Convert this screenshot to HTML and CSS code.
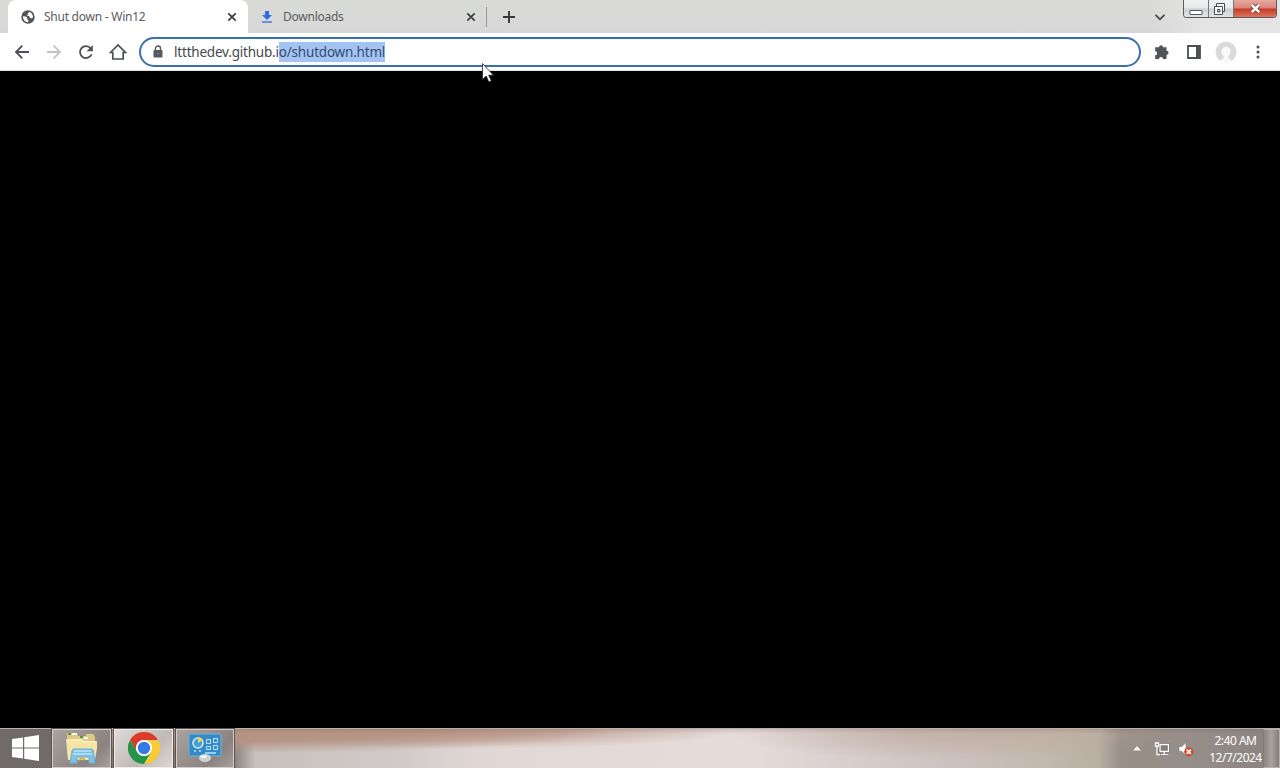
FILE: index.html
```html
<!DOCTYPE html>
<html lang="en">
<head>
    <meta charset="UTF-8">
    <meta name="viewport" content="width=device-width, initial-scale=1.0">
    <title>Shut down - Win12</title>
    <link rel="stylesheet" href="styles.css">
</head>
<body>

    <div class="desktop">
        <!-- Tabs -->
        <div class="tab-strip">
            <div class="tab tab-active">
                <svg class="favicon" width="14" height="14" viewBox="0 0 14 14">
                    <circle cx="7" cy="7" r="6.7" fill="#505357"/>
                    <path d="M2 6.2l3 .3 1.300 1.300-.3 1.500 1.600.7-.5 2.200C4 12 1.800 9.600 2 6.200zM8.600 1.900l-1.900 1.400.4 1.300-1.500 1 2.700.7.6 1.500 2.100.6 1-1.300C12 4.500 10.700 2.600 8.600 1.900z" fill="#fff"/>
                </svg>
                <span class="tab-title">Shut down - Win12</span>
                <svg class="tab-close" width="10" height="10" viewBox="0 0 10 10"><path d="M1.300 1.300l7.400 7.400M8.700 1.300L1.300 8.700" stroke="#3c4043" stroke-width="1.800"/></svg>
            </div>
            <div class="tab">
                <svg class="favicon" width="14" height="14" viewBox="0 0 14 14">
                    <path d="M5 1h4v4h3L7 10 2 5h3z" fill="#2e6de0"/>
                    <path d="M2 11.200h10v1.600H2z" fill="#4f82e0"/>
                </svg>
                <span class="tab-title">Downloads</span>
                <svg class="tab-close" width="10" height="10" viewBox="0 0 10 10"><path d="M1.300 1.300l7.400 7.400M8.700 1.300L1.300 8.700" stroke="#3c4043" stroke-width="1.700"/></svg>
            </div>
            <div class="tab-divider"></div>
            <svg class="new-tab" width="12" height="12" viewBox="0 0 12 12"><path d="M6 0v12M0 6h12" stroke="#36383c" stroke-width="1.900"/></svg>
            <svg class="tab-search" width="12" height="12" viewBox="0 0 12 12"><path d="M1.500 3.800L6 8.300l4.500-4.500" fill="none" stroke="#43454a" stroke-width="1.800"/></svg>
            <div class="window-buttons">
                <div class="win-btn btn-min">
                    <svg width="14" height="8" viewBox="0 0 14 8"><path d="M1 2.500h12v4H1z" fill="#fff" stroke="#555861"/></svg>
                </div>
                <div class="win-btn btn-restore">
                    <svg width="13" height="13" viewBox="0 0 13 13">
                        <path d="M3.500.500h8v8h-8z" fill="#f5f5f5" stroke="#484b52"/>
                        <path d="M1.500 3.500h8v8h-8z" fill="#fff" stroke="#484b52"/>
                        <path d="M4.500 6.500h2.500v2.500h-2.500z" fill="#ccc" stroke="#484b52"/>
                    </svg>
                </div>
                <div class="win-btn btn-close">
                    <svg width="13" height="11" viewBox="0 0 13 11"><path d="M3 2l7 7M10 2L3 9" stroke="#74423d" stroke-width="4.400"/><path d="M2.800 1.800l7.400 7.400M10.200 1.800L2.800 9.200" stroke="#fff" stroke-width="2.600"/></svg>
                </div>
            </div>
        </div>

        <!-- Toolbar -->
        <div class="toolbar">
            <div class="nav-icons">
                <svg width="16" height="16" viewBox="0 0 16 16"><path d="M15 8H2M8.300 1.700L2 8l6.300 6.300" fill="none" stroke="#4c4f53" stroke-width="1.800"/></svg>
                <svg width="16" height="16" viewBox="0 0 16 16"><path d="M1 8h13M7.700 1.700L14 8l-6.300 6.300" fill="none" stroke="#c0c2c4" stroke-width="1.800"/></svg>
                <svg width="16" height="16" viewBox="0 0 16 16"><path d="M13.600 10.200A6 6 0 1 1 12.700 4.300" fill="none" stroke="#4c4f53" stroke-width="1.800"/><path d="M14.800 1v6.200H8.600z" fill="#4c4f53"/></svg>
                <svg width="18" height="18" viewBox="0 0 18 18"><path d="M1.500 9.500L9 2l7.500 7.500h-2.300V16H3.800V9.500z" fill="none" stroke="#4c4f53" stroke-width="1.700"/></svg>
            </div>
            <div class="address-bar">
                <svg class="lock" width="10" height="13" viewBox="0 0 10 13">
                    <path d="M2.500 6V3.500a2.500 2.500 0 0 1 5 0V6" fill="none" stroke="#55585c" stroke-width="1.400"/>
                    <rect x=".5" y="5" width="9" height="7.500" rx="1" fill="#55585c"/>
                    <circle cx="5" cy="8.700" r=".8" fill="#85878a"/>
                </svg>
                <div class="url"><span class="url-host">lttthedev.github.i</span><span class="url-selected">o/shutdown.html</span></div>
            </div>
            <div class="toolbar-icons">
                <svg width="16" height="16" viewBox="0 0 16 16"><path d="M5 3.200a2 2 0 0 1 4 0h3.500v3.500a2.100 2.100 0 0 1 0 4.200V15H9a2 2 0 0 0-4 0H1.200v-3.700a2 2 0 0 0 0-4V3.200z" fill="#505357"/></svg>
                <svg width="16" height="16" viewBox="0 0 16 16"><path d="M2 2h12v12H2z" fill="none" stroke="#4c4f53" stroke-width="1.800"/><path d="M10 2h4v12h-4z" fill="#4c4f53"/></svg>
                <svg class="avatar" width="22" height="22" viewBox="0 0 22 22"><circle cx="11" cy="11" r="10.500" fill="#d9dada"/><path d="M6.500 10.500a4.500 4.800 0 1 1 9 0c0 2.400-1 3.800-2.200 4.600v2.100l2.700 1.600v1.600q-5 2.200-10 0v-1.600l2.700-1.600v-2.100c-1.200-.8-2.200-2.200-2.200-4.600z" fill="#fafafa"/></svg>
                <svg width="4" height="16" viewBox="0 0 4 16"><circle cx="2" cy="3" r="1.500" fill="#4c4f53"/><circle cx="2" cy="8" r="1.500" fill="#4c4f53"/><circle cx="2" cy="13" r="1.500" fill="#4c4f53"/></svg>
            </div>
        </div>

        <!-- Page content -->
        <div class="page"></div>

        <!-- Taskbar -->
        <div class="taskbar">
            <div class="start">
                <svg width="27" height="26" viewBox="0 0 27 26"><path d="M0 4l11-1.600v10H0zM12.200 2.200L27 0v12.400H12.200zM0 13.500h11v10L0 22zM12.200 13.500H27V26l-14.800-2.200z" fill="#fff"/></svg>
            </div>
            <div class="task">
                <svg width="34" height="32" viewBox="0 0 34 32">
                    <path d="M2 4V1h10l1 3h8V2h7l2 3v22H3z" fill="#dfc985"/>
                    <path d="M3 2h3M15 5h3" stroke="#4e9847" stroke-width="2"/>
                    <path d="M7 2h5M19 6h4" stroke="#f8f8ee" stroke-width="2"/>
                    <path d="M1 7h16l2 2h13v7l-2 12H3z" fill="#f5e4a4"/>
                    <path d="M2 8h14l2 2h13" fill="none" stroke="#fff7cc"/>
                    <path d="M5 31l2-12q.5-2 2-2h17q2 0 2.500 2L30 31h-6v-6H12v6z" fill="#80c1e6" stroke="#6aaed4"/>
                    <path d="M9 19h17M8 22h19" stroke="#b9e4f8" stroke-width="1.500"/>
                    <path d="M14 28l3-2 3 2" fill="none" stroke="#cbb364" stroke-width="2"/>
                </svg>
            </div>
            <div class="task task-active">
                <svg width="32" height="32" viewBox="0 0 32 32">
                    <path d="M16 8H29.860A16 16 0 0 1 16 32L22.930 20z" fill="#f8ca35"/>
                    <path d="M2.140 8A16 16 0 0 1 29.860 8H16a8 8 0 0 0-6.930 12z" fill="#dc3b2c"/>
                    <path d="M2.140 8L9.070 20A8 8 0 0 0 22.930 20L16 32A16 16 0 0 1 2.140 8z" fill="#27934a"/>
                    <circle cx="16" cy="16" r="8" fill="#fff"/>
                    <circle cx="16" cy="16" r="6.200" fill="#3477e8"/>
                </svg>
            </div>
            <div class="task task-panel">
                <svg width="34" height="30" viewBox="0 0 34 30">
                    <rect x="1" y="1" width="32" height="22" rx="1.500" fill="#3489c8" stroke="#72b2db"/>
                    <circle cx="10" cy="10" r="5" fill="#479fd9" stroke="#d2edf8" stroke-width="1.500"/>
                    <path d="M10 10V4a6 6 0 0 1 5 3z" fill="#f1d34e"/>
                    <path d="M18.500 6.500h4v4h-4zM25.500 5.500h4v4h-4zM18.500 13.500h4v3h-4zM25.500 12.500h4v4h-4z" fill="#338acb" stroke="#c5e5f5"/>
                    <path d="M6 18h2M11 18h2M17 20h11" stroke="#b9e1f3" stroke-width="1.500"/>
                    <ellipse cx="17" cy="25" rx="6" ry="4" fill="#cdd4d5"/>
                    <ellipse cx="15.500" cy="23.500" rx="3" ry="1.500" fill="#f3f5f5"/>
                </svg>
            </div>
            <div class="tray">
                <svg class="tray-arrow" width="8" height="5" viewBox="0 0 8 5"><path d="M4 0l4 4.500H0z" fill="#f5f2f0"/></svg>
                <svg class="tray-network" width="16" height="16" viewBox="0 0 16 16">
                    <path d="M6 3.500h8.500v7H6zM10.200 10.500v3M7 13.700h7" fill="none" stroke="#665f5c" stroke-width="2.600"/>
                    <path d="M6 3.500h8.500v7H6zM10.200 10.500v3M7 13.700h7" fill="#847d79" stroke="#fff" stroke-width="1.300"/>
                    <path d="M1.500 2v3h3V2zM3 5v8.500h3" fill="#746d6a" stroke="#fff" stroke-width="1.300"/>
                </svg>
                <svg class="tray-sound" width="16" height="16" viewBox="0 0 16 16">
                    <path d="M1 5.500h3L8 1.500v13L4 10.500H1z" fill="#fff" stroke="#706762" stroke-width=".5"/>
                    <circle cx="10.800" cy="10.800" r="4.600" fill="#d04a2c"/>
                    <path d="M8.700 8.700l4.200 4.200M12.900 8.700l-4.200 4.200" stroke="#fff" stroke-width="1.700"/>
                </svg>
                <div class="clock">
                    <span class="time">2:40 AM</span>
                    <span class="date">12/7/2024</span>
                </div>
                <div class="show-desktop"></div>
            </div>
        </div>

        <svg class="cursor" width="12" height="20" viewBox="0 0 12 20"><path d="M.500.500v16l3.700-3.500 2.600 5.900 2.500-1.100-2.600-5.600h4.800z" fill="#fff" stroke="#222" stroke-width=".8"/></svg>
    </div>

</body>
</html>
```
FILE: styles.css
```css
* {
    box-sizing: border-box;
}

body {
    font-family: "Noto Sans", "Open Sans", sans-serif;
    margin: 0;
    overflow: hidden;
}

svg {
    display: block;
    flex-shrink: 0;
}

.desktop {
    display: flex;
    flex-direction: column;
    width: 1280px;
    height: 768px;
    background-color: #000;
    position: relative;
}

.tab-strip {
    display: flex;
    height: 33px;
    align-items: center;
    padding-left: 8px;
    background: linear-gradient(90deg, transparent 1150px, rgba(235, 235, 235, 0.6) 1200px), linear-gradient(#d9dbd8, #d8d7d8);
}

.tab {
    display: flex;
    align-items: center;
    width: 239px;
    height: 33px;
    padding: 0 11px 0 12px;
    color: #5a5c5f;
}

.tab-active {
    width: 240px;
    padding-left: 13px;
    padding-right: 11px;
    background-color: #fff;
    border-radius: 8px 8px 0 0;
}

.tab-title {
    margin-left: 9px;
    font-size: 12px;
    white-space: nowrap;
    letter-spacing: -0.25px;
}

.tab-close {
    margin-left: auto;
}

.tab-divider {
    width: 1px;
    height: 20px;
    margin-left: -1px;
    background-color: #96989b;
}

.new-tab {
    margin-left: 16px;
}

.tab-search {
    margin-left: auto;
    margin-right: 17px;
}

.window-buttons {
    display: flex;
    align-self: flex-start;
    height: 18px;
    margin-right: 3px;
    border: 1px solid #5b5c60;
    border-top: none;
    border-radius: 0 0 4px 4px;
    overflow: hidden;
}

.win-btn {
    display: flex;
    align-items: center;
    justify-content: center;
    width: 25px;
    background: linear-gradient(#f2f2f2 0, #e8e8e8 48%, #cccdce 52%, #e3e4e4 100%);
    border-right: 1px solid #76777a;
}

.btn-min {
    padding-top: 6px;
}

.btn-restore {
    padding-right: 3px;
    padding-top: 1px;
}

.btn-close {
    width: 42px;
    border-right: none;
    background: linear-gradient(#e7aaa0 0, #d98477 48%, #c23c28 52%, #df7558 100%);
}

.toolbar {
    display: flex;
    align-items: center;
    height: 38px;
    background-color: #fff;
    border-bottom: 1px solid #dfe2e5;
}

.nav-icons {
    display: flex;
    align-items: center;
    gap: 16px;
    width: 139px;
    padding-left: 14px;
}

.nav-icons svg:last-child {
    margin-left: -1px;
}

.address-bar {
    display: flex;
    align-items: center;
    width: 1002px;
    height: 30px;
    padding-left: 12px;
    border: 2px solid #3871b2;
    border-radius: 15px;
}

.url {
    display: flex;
    margin-left: 11px;
    font-size: 13.5px;
    line-height: 20px;
    letter-spacing: -0.2px;
    color: #45484c;
    white-space: nowrap;
}

.url-selected {
    background-color: #a3c4f3;
    color: #344c70;
}

.toolbar-icons {
    display: flex;
    align-items: center;
    gap: 16px;
    padding-left: 13px;
}

.avatar {
    margin: 0 -3px;
}

.toolbar-icons svg:last-child {
    margin-left: 6px;
}

.page {
    flex: 1;
    background-color: #000;
}

.taskbar {
    display: flex;
    height: 40px;
    border-top: 1px solid #b9afab;
    background:
        linear-gradient(rgba(120, 90, 80, 0.2), transparent 12%),
        radial-gradient(ellipse 390px 24px at 230px 0, rgba(180, 147, 131, 0.95) 50%, transparent 100%),
        radial-gradient(ellipse 260px 20px at 480px 0, rgba(187, 153, 140, 0.8) 30%, transparent 100%),
        radial-gradient(ellipse 220px 26px at 950px 5px, rgba(191, 168, 156, 0.6) 20%, transparent 100%),
        linear-gradient(90deg, #716b69 0, #8b8582 235px, #c7c0bb 255px, #d1cac9 400px, #e1d8d5 480px, #e6dcda 750px, #d7cecd 850px, #cdc4c1 940px, #c3b9ae 1040px, #b9afa3 1098px, #999089 1120px, #958d88 1200px, #8a827f 1280px);
}

.start {
    display: flex;
    align-items: center;
    width: 52px;
    padding-left: 12px;
    padding-bottom: 2px;
    background-color: #706a68;
}

.task {
    display: flex;
    align-items: center;
    justify-content: center;
    width: 59px;
    margin-right: 3px;
    padding-bottom: 1px;
    border: 1px solid #d5cdca;
    outline: 1px solid #5b5451;
    background: linear-gradient(135deg, #aaa29f, #8b8380 70%, #a69e9a);
}

.task-active {
    background: linear-gradient(135deg, #dedbd8, #c0b9b5 60%, #ded8d4);
    border-color: #f0ece9;
}

.task-panel {
    width: 58px;
}

.tray {
    display: flex;
    align-items: center;
    margin-left: auto;
    height: 39px;
}

.tray-arrow {
    margin-right: 13px;
}

.tray-network {
    margin-right: 8px;
}

.tray-sound {
    margin-right: 15px;
}

.clock {
    display: flex;
    flex-direction: column;
    align-items: center;
    width: 54px;
    padding-top: 1px;
    padding-right: 1px;
    font-size: 12px;
    line-height: 17px;
    letter-spacing: -0.5px;
    color: #fff;
    white-space: nowrap;
}

.show-desktop {
    width: 17px;
    height: 39px;
    border: 1px solid #b8b0ad;
    border-left-color: #817a77;
    background: linear-gradient(90deg, #8d8582, #aaa29f 50%, #857d7a);
}

.cursor {
    position: absolute;
    left: 482px;
    top: 63px;
}
```
